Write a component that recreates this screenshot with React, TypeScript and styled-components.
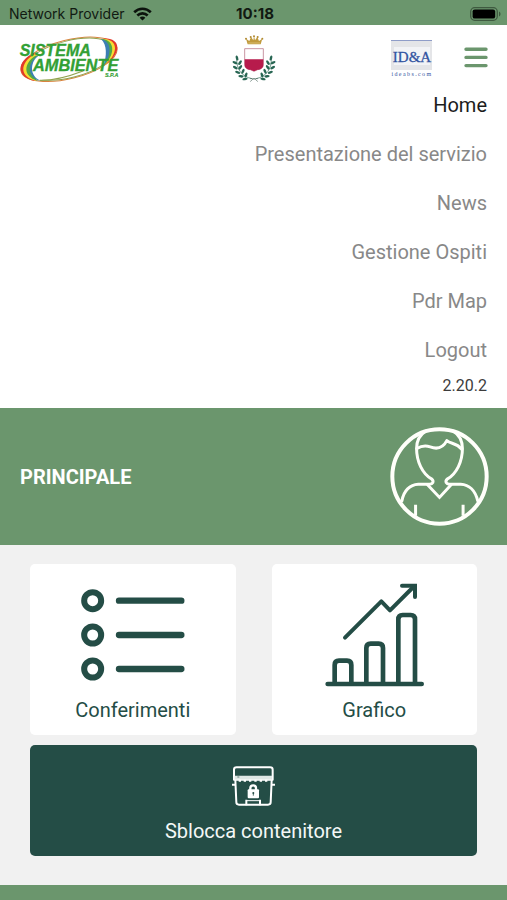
import React from "react";
import styled, { createGlobalStyle } from "styled-components";

const green = "#6b966d";
const dark = "#244d46";

const GlobalStyle = createGlobalStyle`
  * { box-sizing: border-box; }
  body {
    margin: 0;
    background: #f1f1f1;
    font-family: Roboto, "Liberation Sans", sans-serif;
  }
  svg { display: block; }
`;

const Page = styled.div`
  display: flex;
  flex-direction: column;
  min-height: 100vh;
`;

const StatusBar = styled.div`
  display: grid;
  grid-template-columns: 1fr auto 1fr;
  align-items: center;
  height: 25px;
  padding: 2px 6px 0 9px;
  background: ${green};
  color: #111a12;
  font: 14px/20px Inter, sans-serif;
`;

const Carrier = styled.div`
  display: flex;
  align-items: center;
  gap: 8px;
  white-space: nowrap;
`;

const Clock = styled.time`
  font-size: 15px;
  font-weight: 700;
`;

const BatterySlot = styled.div`
  display: flex;
  justify-content: flex-end;
`;

const Header = styled.header`
  display: grid;
  grid-template-columns: 1fr auto 1fr;
  align-items: center;
  padding: 10px 19px;
  background: #fff;
`;

const HeaderEnd = styled.div`
  display: flex;
  align-items: center;
  justify-content: flex-end;
  gap: 30px;
`;

const MenuButton = styled.button`
  padding: 0 0 4px;
  border: 0;
  background: none;
  cursor: pointer;
`;

const Menu = styled.nav`
  padding: 0 20px 12px;
  background: #fff;
  text-align: right;
`;

const MenuList = styled.ul`
  display: flex;
  flex-direction: column;
  align-items: flex-end;
  gap: 25px;
  margin: 0;
  padding: 0;
  list-style: none;
`;

const MenuLink = styled.a<{ $active?: boolean }>`
  display: block;
  color: ${(p) => (p.$active ? "#1c1c1c" : "#888")};
  font-size: 20px;
  line-height: 24px;
  text-decoration: none;
`;

const Version = styled.p`
  margin: 14px 0 0;
  color: #3c3c3c;
  font-size: 16px;
  line-height: 20px;
`;

const Banner = styled.section`
  display: flex;
  align-items: center;
  justify-content: space-between;
  padding: 19px 18px 19px 20px;
  background: ${green};
`;

const Title = styled.h1`
  margin: 0;
  color: #fff;
  font-size: 20px;
  font-weight: 700;
  line-height: 24px;
`;

const Main = styled.main`
  display: grid;
  grid-template-columns: 1fr 1fr;
  gap: 10px 36px;
  padding: 19px 30px 29px;
  background: #f1f1f1;
`;

const Tile = styled.button<{ $wide?: boolean }>`
  display: flex;
  flex-direction: column;
  align-items: center;
  gap: ${(p) => (p.$wide ? 13 : 11)}px;
  grid-column: ${(p) => (p.$wide ? "1 / -1" : "auto")};
  padding: ${(p) => (p.$wide ? 21 : 19)}px 12px 13px;
  border: 0;
  border-radius: 5px;
  background: ${(p) => (p.$wide ? dark : "#fff")};
  color: ${(p) => (p.$wide ? "#f4f8f7" : dark)};
  font: 20px/24px Roboto, "Liberation Sans", sans-serif;
  cursor: pointer;
`;

const Footer = styled.footer`
  flex: 1;
  min-height: 15px;
  background: ${green};
`;

const Wifi = () => (
  <svg width="19" height="14" viewBox="0 0 19 14" fill="none" stroke="#0c130d" strokeWidth="2.6" aria-hidden="true">
    <path d="M1.2 5.2C6 .5 13 .5 17.8 5.2" />
    <path d="M4.3 8.5c3-2.9 7.4-2.9 10.4 0" />
    <path d="M9.5 13.5 6.6 10.7c1.6-1.6 4.2-1.6 5.8 0z" fill="#0c130d" stroke="none" />
  </svg>
);

const Battery = () => (
  <svg width="31" height="14" viewBox="0 0 31 14" role="img" aria-label="Battery full">
    <rect x=".7" y=".7" width="26.6" height="12.6" rx="4" fill="none" stroke="#3f5a40" strokeWidth="1.3" />
    <rect x="2.6" y="2.4" width="22.6" height="9.2" rx="2.2" fill="#000" />
    <path d="M29 4.5c2 .8 2 4.2 0 5z" fill="#3f5a40" />
  </svg>
);

const SistemaLogo = () => (
  <svg width="101" height="48" viewBox="30 18 303 144" role="img" aria-label="Sistema Ambiente S.P.A.">
    <g fill="none" transform="rotate(-14 180 91)">
      <ellipse cx="180" cy="91" rx="148" ry="58" stroke="#d9843f" strokeWidth="3" />
      <ellipse cx="182" cy="91" rx="139" ry="55" stroke="#8fa24c" strokeWidth="3" />
    </g>
    <path d="M282 28C343 26 335 80 284 110C314 80 330 46 282 28Z" fill="#e2382b" />
    <path d="M280 29C334 30 326 80 284 110C307 80 319 46 280 29Z" fill="#f5dc32" />
    <path d="M278 29C322 34 317 80 284 110C300 80 307 46 278 29Z" fill="#53a846" />
    <path d="M276 30C311 38 307 80 284 110C293 80 295 48 276 30Z" fill="#3c7fb4" />
    <path d="M74 72C19 99 23 146 78 156C55 139 48 105 82 76Z" fill="#e2382b" />
    <path d="M76 76C32 102 30 144 82 156C61 139 54 105 84 78Z" fill="#f5dc32" />
    <path d="M79 80C44 103 40 141 87 156C68 139 62 105 86 80Z" fill="#53a846" />
    <path d="M83 82C56 104 52 141 93 156C76 139 70 105 87 82Z" fill="#3c7fb4" />
    <path d="M83 85C64 104 62 140 92 154C120 150 150 145 170 138L110 80Z" fill="#fff" />
    <g fill="#32a035" stroke="#32a035" fontFamily="Liberation Sans, Arial, sans-serif" fontWeight="700" fontStyle="italic">
      <text x="32" y="82" fontSize="48" strokeWidth="1">SISTEMA</text>
      <text x="72" y="125" fontSize="49" strokeWidth="1">AMBIENTE</text>
      <text x="288" y="143" fontSize="16" strokeWidth=".5">S.P.A</text>
    </g>
    <path d="M92 154C128 155 178 143 222 126" fill="none" stroke="#8fa24c" strokeWidth="4" />
  </svg>
);

const leaves: [number, number, number][] = [
  [48, 87, 75], [42, 101, 25], [57, 101, -55], [43, 116, 30], [58, 115, -55],
  [50, 130, 20], [66, 127, -65], [60, 142, 5], [75, 138, -70], [72, 150, -10],
];

const Branch = () => (
  <>
    <path d="M47 88C46 120 62 143 93 149" fill="none" stroke="#286653" strokeWidth="2" />
    {leaves.map(([x, y, r]) => (
      <ellipse key={`${x}-${y}`} cx={x} cy={y} rx="8" ry="3.8" fill="#286653" transform={`rotate(${r} ${x} ${y})`} />
    ))}
  </>
);

const Crest = () => (
  <svg width="44" height="48" viewBox="33 18 132 144" role="img" aria-label="Stemma comunale">
    <path d="m80 46-5-17 10 7 5-12 7 10 2-13 3 13 7-10 5 12 10-7-5 17z" fill="#c09a3d" />
    <g fill="#b18a30">
      <circle cx="75" cy="29" r="3" /><circle cx="89" cy="24" r="3" />
      <circle cx="99" cy="22" r="3" /><circle cx="110" cy="24" r="3" /><circle cx="124" cy="29" r="3" />
    </g>
    <path d="M82 42h35" stroke="#f0dda7" strokeWidth="1.5" />
    <path d="M71 59h56v48c0 10-9 15-17 15l-11 5-11-5c-8 0-17-5-17-15z" fill="#fff" stroke="#ae6076" strokeWidth="2" />
    <path d="M71 91h56v16c0 10-9 15-17 15l-11 5-11-5c-8 0-17-5-17-15z" fill="#b71b4c" />
    <Branch />
    <g transform="translate(198 0) scale(-1 1)"><Branch /></g>
    <path d="M88 158c5-8 13-11 23-9M110 158c-5-8-13-11-23-9" fill="none" stroke="#536e63" strokeWidth="2" />
  </svg>
);

const IdeaLogo = () => (
  <svg width="44" height="38" viewBox="0 0 44 38" role="img" aria-label="ID&A ideabs.com">
    <rect x="1" y="0" width="41" height="30" fill="#e4e5e8" />
    <path d="M1 .5h41" stroke="#8f9dc8" strokeWidth="1" />
    <rect x="4" y="7" width="36" height="18" fill="#f2f3f6" />
    <g fill="#3153a1" fontFamily="Liberation Serif, serif" textAnchor="middle">
      <text x="22" y="22" fontSize="15" stroke="#3153a1" strokeWidth=".3">ID&amp;A</text>
      <text x="22" y="36" fontSize="6" letterSpacing="1.4">ideabs.com</text>
    </g>
  </svg>
);

const Hamburger = () => (
  <svg width="24" height="21" viewBox="0 0 24 21" stroke={green} strokeWidth="3.4" strokeLinecap="round" aria-hidden="true">
    <path d="M2 2.2h20M2 10.4h20M2 18.6h20" />
  </svg>
);

const Avatar = () => (
  <svg width="99" height="99" viewBox="31 34 298 298" fill="none" stroke="#fffffa" strokeWidth="9" strokeLinecap="round" strokeLinejoin="round" role="img" aria-label="Profilo">
    <circle cx="180" cy="183" r="142" strokeWidth="12" />
    <path d="M138 47C119 59 111 77 111 99C111 137 128 175 157 191C164 198 160 206 150 206H116C91 207 72 226 67 256" />
    <path d="M222 47C241 59 249 77 249 99C249 137 232 175 203 191C196 198 200 206 210 206H244C269 207 288 226 295 256" />
    <path d="M112 99C128 89 144 91 152 94C171 101 190 98 202 75C214 86 230 80 247 101" />
    <path d="M144 208 180 246 215 208" strokeLinejoin="miter" />
    <path d="M108 268V301M251 268V301" strokeLinecap="butt" />
  </svg>
);

const ListIcon = () => (
  <svg width="104" height="104" viewBox="183 84 312 312" fill="none" stroke={dark} aria-hidden="true">
    {[137, 240, 342].map((y) => (
      <g key={y}>
        <circle cx="218" cy={y} r="25.5" strokeWidth="18" />
        <path d={`M297 ${y}H484`} strokeWidth="19" strokeLinecap="round" />
      </g>
    ))}
  </svg>
);

const ChartIcon = () => (
  <svg width="104" height="104" viewBox="172 84 312 312" fill="none" stroke={dark} strokeWidth="14" strokeLinecap="round" strokeLinejoin="round" aria-hidden="true">
    <path d="M189 387H471" />
    <path d="M210 386V330Q210 317 223 317H247Q260 317 260 330V386" />
    <path d="M305 386V279Q305 266 318 266H342Q355 266 355 279V386" />
    <path d="M401 386V193Q401 180 414 180H438Q451 180 451 193V386" />
    <path d="M241 248 350 139 376 166 449 93" strokeWidth="12" />
    <path d="M412 92H451V126" strokeWidth="12" strokeLinejoin="miter" />
  </svg>
);

const BinIcon = () => (
  <svg width="43" height="40" viewBox="40 32 129 120" fill="none" stroke="#fff" strokeWidth="6" strokeLinejoin="round" aria-hidden="true">
    <path d="M46 73V43Q46 36 54 36H154Q162 36 162 43V73Z" />
    <path d="M48 67H160" stroke="#dfe7e5" strokeWidth="11" />
    <path d="M56 65h6" stroke={dark} strokeWidth="2" />
    <path d="M50 74 53 141Q53 148 61 148H148Q156 148 156 141L159 74" />
    <path d="M60 76h7M75 76h7M91 76h7M107 76h7M123 76h7M139 76h7" />
    <path d="M40 88h11M158 88h11" />
    <path d="M83 150V133M124 150V133" strokeWidth="6" />
    <path d="M83 136H124" strokeWidth="3" />
    <path d="M95 106V98Q95 90 103.500 90T112 98V106" strokeWidth="7" />
    <rect x="87" y="102" width="34" height="27" rx="3" fill="#fff" stroke="none" />
    <circle cx="104" cy="113" r="3" fill={dark} stroke="none" />
    <path d="M104 114v7" stroke={dark} strokeWidth="2.5" />
  </svg>
);

const links = ["Home", "Presentazione del servizio", "News", "Gestione Ospiti", "Pdr Map", "Logout"];

export default function App() {
  return (
    <Page>
      <GlobalStyle />
      <StatusBar>
        <Carrier>Network Provider<Wifi /></Carrier>
        <Clock>10:18</Clock>
        <BatterySlot><Battery /></BatterySlot>
      </StatusBar>
      <Header>
        <SistemaLogo />
        <Crest />
        <HeaderEnd>
          <IdeaLogo />
          <MenuButton type="button" aria-label="Menu" aria-expanded="true"><Hamburger /></MenuButton>
        </HeaderEnd>
      </Header>
      <Menu>
        <MenuList>
          {links.map((label, i) => (
            <li key={label}>
              <MenuLink href="#" $active={i === 0} aria-current={i === 0 ? "page" : undefined}>{label}</MenuLink>
            </li>
          ))}
        </MenuList>
        <Version>2.20.2</Version>
      </Menu>
      <Banner>
        <Title>PRINCIPALE</Title>
        <Avatar />
      </Banner>
      <Main>
        <Tile type="button"><ListIcon />Conferimenti</Tile>
        <Tile type="button"><ChartIcon />Grafico</Tile>
        <Tile type="button" $wide><BinIcon />Sblocca contenitore</Tile>
      </Main>
      <Footer />
    </Page>
  );
}
